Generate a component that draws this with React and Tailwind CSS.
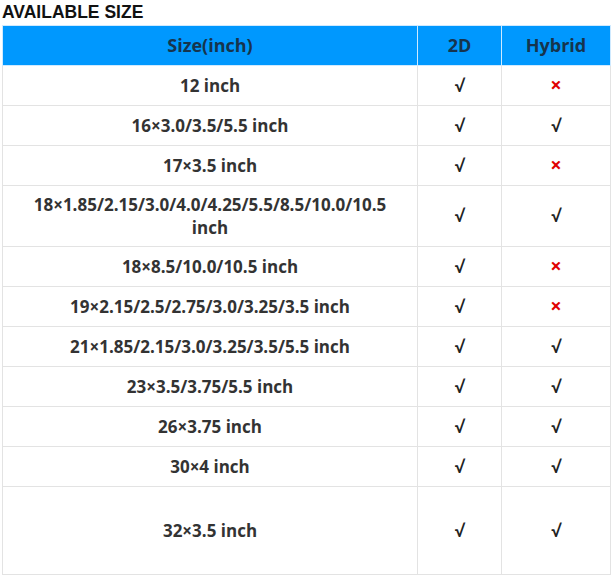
import React from "react";

const rows = [
  { size: "12 inch", d2: true, hybrid: false },
  { size: "16×3.0/3.5/5.5 inch", d2: true, hybrid: true },
  { size: "17×3.5 inch", d2: true, hybrid: false },
  { size: "18×1.85/2.15/3.0/4.0/4.25/5.5/8.5/10.0/10.5 inch", d2: true, hybrid: true },
  { size: "18×8.5/10.0/10.5 inch", d2: true, hybrid: false },
  { size: "19×2.15/2.5/2.75/3.0/3.25/3.5 inch", d2: true, hybrid: false },
  { size: "21×1.85/2.15/3.0/3.25/3.5/5.5 inch", d2: true, hybrid: true },
  { size: "23×3.5/3.75/5.5 inch", d2: true, hybrid: true },
  { size: "26×3.75 inch", d2: true, hybrid: true },
  { size: "30×4 inch", d2: true, hybrid: true },
  { size: "32×3.5 inch", d2: true, hybrid: true, tall: true },
];

function Mark({ ok }) {
  return ok ? (
    <span className="text-[#222]">√</span>
  ) : (
    <span className="text-[#e00000] text-[20px] leading-none">×</span>
  );
}

export default function App() {
  return (
    <div className="bg-white w-[612px] h-[577px] font-['Open_Sans',sans-serif]">
      <h2 className="font-['Liberation_Sans',Arial,sans-serif] font-bold text-[17.5px] leading-[25px] text-[#111] pl-[2px]">
        AVAILABLE SIZE
      </h2>
      <table className="ml-[2px] w-[609px] border-collapse text-[17px] font-bold text-[#333] text-center">
        <thead>
          <tr className="bg-[#0098fe] text-[#16344d] h-[40px] text-[18px]">
            <th className="w-[415px] border border-[#cfeaff] font-bold">Size(inch)</th>
            <th className="w-[84px] border border-[#cfeaff] font-bold">2D</th>
            <th className="border border-[#cfeaff] font-bold">Hybrid</th>
          </tr>
        </thead>
        <tbody>
          {rows.map((r) => (
            <tr key={r.size} className={r.tall ? "h-[88px]" : "h-[40px]"}>
              <td className="border border-[#e3e3e3] px-6 py-[7px] leading-[23px]">{r.size}</td>
              <td className="border border-[#e3e3e3]">
                <Mark ok={r.d2} />
              </td>
              <td className="border border-[#e3e3e3]">
                <Mark ok={r.hybrid} />
              </td>
            </tr>
          ))}
        </tbody>
      </table>
    </div>
  );
}
